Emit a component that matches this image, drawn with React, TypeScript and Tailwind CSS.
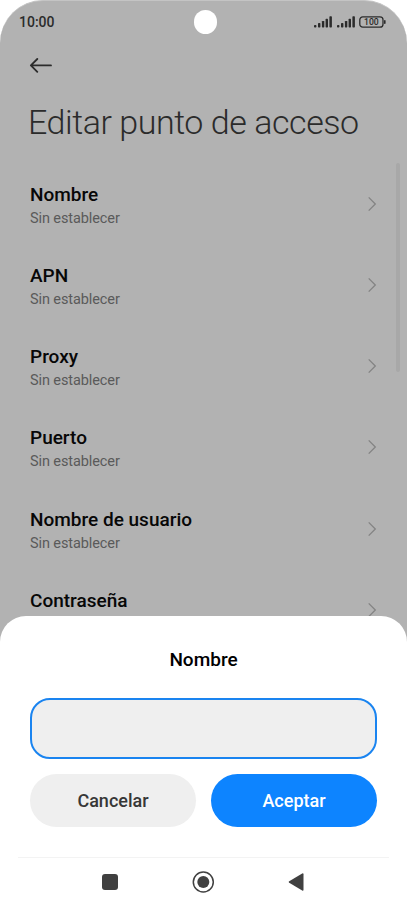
const fields = ['Nombre', 'APN', 'Proxy', 'Puerto', 'Nombre de usuario', 'Contraseña'];

function SignalIcon() {
  return (
    <svg className="h-3 w-[18px]" viewBox="0 0 18 12" fill="#2b2b2b">
      <rect x="0" y="8.9" width="2.4" height="2.6" rx="0.8" />
      <rect x="4" y="7" width="2.4" height="4.5" rx="0.7" />
      <rect x="7.9" y="4.9" width="2.4" height="6.6" rx="0.7" />
      <rect x="11.6" y="2.8" width="2.4" height="8.7" rx="0.7" />
      <rect x="15.4" y="0.2" width="2.5" height="11.3" rx="0.7" />
    </svg>
  );
}

function BatteryIcon() {
  return (
    <svg className="ml-[4px] h-3 w-[27px]" viewBox="0 0 27 12" fill="none">
      <rect x="0.8" y="0.8" width="23.2" height="10.4" rx="3" stroke="#2b2b2b" strokeWidth="1.3" />
      <rect x="25" y="4" width="1.6" height="4" rx="0.8" fill="#2b2b2b" />
      <text x="12.4" y="9.1" textAnchor="middle" fontSize="8.6" fontWeight="500" fill="#2b2b2b">
        100
      </text>
    </svg>
  );
}

function StatusBar() {
  return (
    <div className="relative flex h-[43px] items-center justify-between pr-[21px] pl-[19px]">
      <span className="text-[14px] font-medium text-[#2b2b2b]">10:00</span>
      <div className="absolute top-[9px] left-[194px] h-6 w-[23px] rounded-full bg-white" />
      <div className="mb-[2px] flex items-center">
        <SignalIcon />
        <div className="w-[5px]" />
        <SignalIcon />
        <BatteryIcon />
      </div>
    </div>
  );
}

function FieldRow({ label }: { label: string }) {
  return (
    <li className="flex h-[81.2px] items-center justify-between pr-[30px] pl-[30px]">
      <div className="pt-[2px]">
        <p className="text-[19px] leading-[24px] font-medium text-[#070707]">{label}</p>
        <p className="mt-[2px] text-[14.5px] leading-[20px] tracking-[-0.1px] text-[#5a5a5a]">Sin establecer</p>
      </div>
      <svg className="mb-[2px] h-4 w-[9px]" viewBox="0 0 9 16" fill="none" stroke="#838383" strokeWidth="1.3">
        <path d="M0.7 1.4L7.3 8L0.7 14.6" />
      </svg>
    </li>
  );
}

function NameDialog() {
  return (
    <section className="absolute inset-x-0 bottom-0 flex h-[290px] flex-col rounded-t-[26px] bg-white">
      <h2 className="mt-[32px] text-center text-[19px] leading-[24px] font-medium text-black">Nombre</h2>
      <div className="mt-[26px] px-[30px]">
        <input
          aria-label="Nombre"
          className="block h-[61px] w-full rounded-[20px] border-2 border-[#1a84f0] bg-[#efefef] px-4 outline-none"
        />
      </div>
      <div className="mt-[15px] flex gap-[15px] px-[30px]">
        <button className="h-[53px] flex-1 rounded-full bg-[#efefef] text-[18px] font-medium text-[#373737]">
          Cancelar
        </button>
        <button className="h-[53px] flex-1 rounded-full bg-[#0d84ff] text-[18px] font-medium text-white">
          Aceptar
        </button>
      </div>
      <nav className="mx-[18px] mt-[30px] flex h-[48px] items-center border-t border-[#f3f3f3] pl-[84px]">
        <div className="h-4 w-4 rounded-[3px] bg-[#404040]" />
        <svg className="ml-[73px] h-6 w-6" viewBox="0 0 24 24">
          <circle cx="12.3" cy="12" r="10" fill="none" stroke="#404040" strokeWidth="1.5" />
          <circle cx="12.3" cy="12" r="6" fill="#404040" />
        </svg>
        <svg className="ml-[73px] h-5 w-4" viewBox="0 0 16 20" fill="#404040">
          <path d="M1.2 9.2L14.2 1.4Q15.5 0.8 15.5 2.2V17.8Q15.5 19.2 14.2 18.6L1.2 10.8Q0 10 1.2 9.2Z" />
        </svg>
      </nav>
    </section>
  );
}

export default function App() {
  return (
    <div className="relative h-[906px] w-[407px] overflow-hidden bg-white font-[Roboto,sans-serif]">
      <main className="h-[660px] rounded-t-[43px] border-t border-[#c4c4c4] bg-[#b2b2b2]">
        <StatusBar />
        <header>
          <svg className="mt-[13px] ml-[29px] h-4 w-6" viewBox="0 0 24 16" fill="none" stroke="#2b2b2b" strokeWidth="1.8" strokeLinecap="round" strokeLinejoin="round">
            <path d="M22 8.4H2M8.3 2L1.9 8.4L8.3 14.8" />
          </svg>
          <h1 className="mt-[29px] ml-[28px] text-[34px] leading-[40px] font-light tracking-[-0.45px] text-[#2b2b2b]">
            Editar punto de acceso
          </h1>
        </header>
        <ul className="mt-[22.3px]">
          {fields.map((label) => (
            <FieldRow key={label} label={label} />
          ))}
        </ul>
      </main>
      <div className="absolute top-[163px] right-[7px] h-[209px] w-[4px] rounded-full bg-[#a8a8a8]" />
      <NameDialog />
    </div>
  );
}
